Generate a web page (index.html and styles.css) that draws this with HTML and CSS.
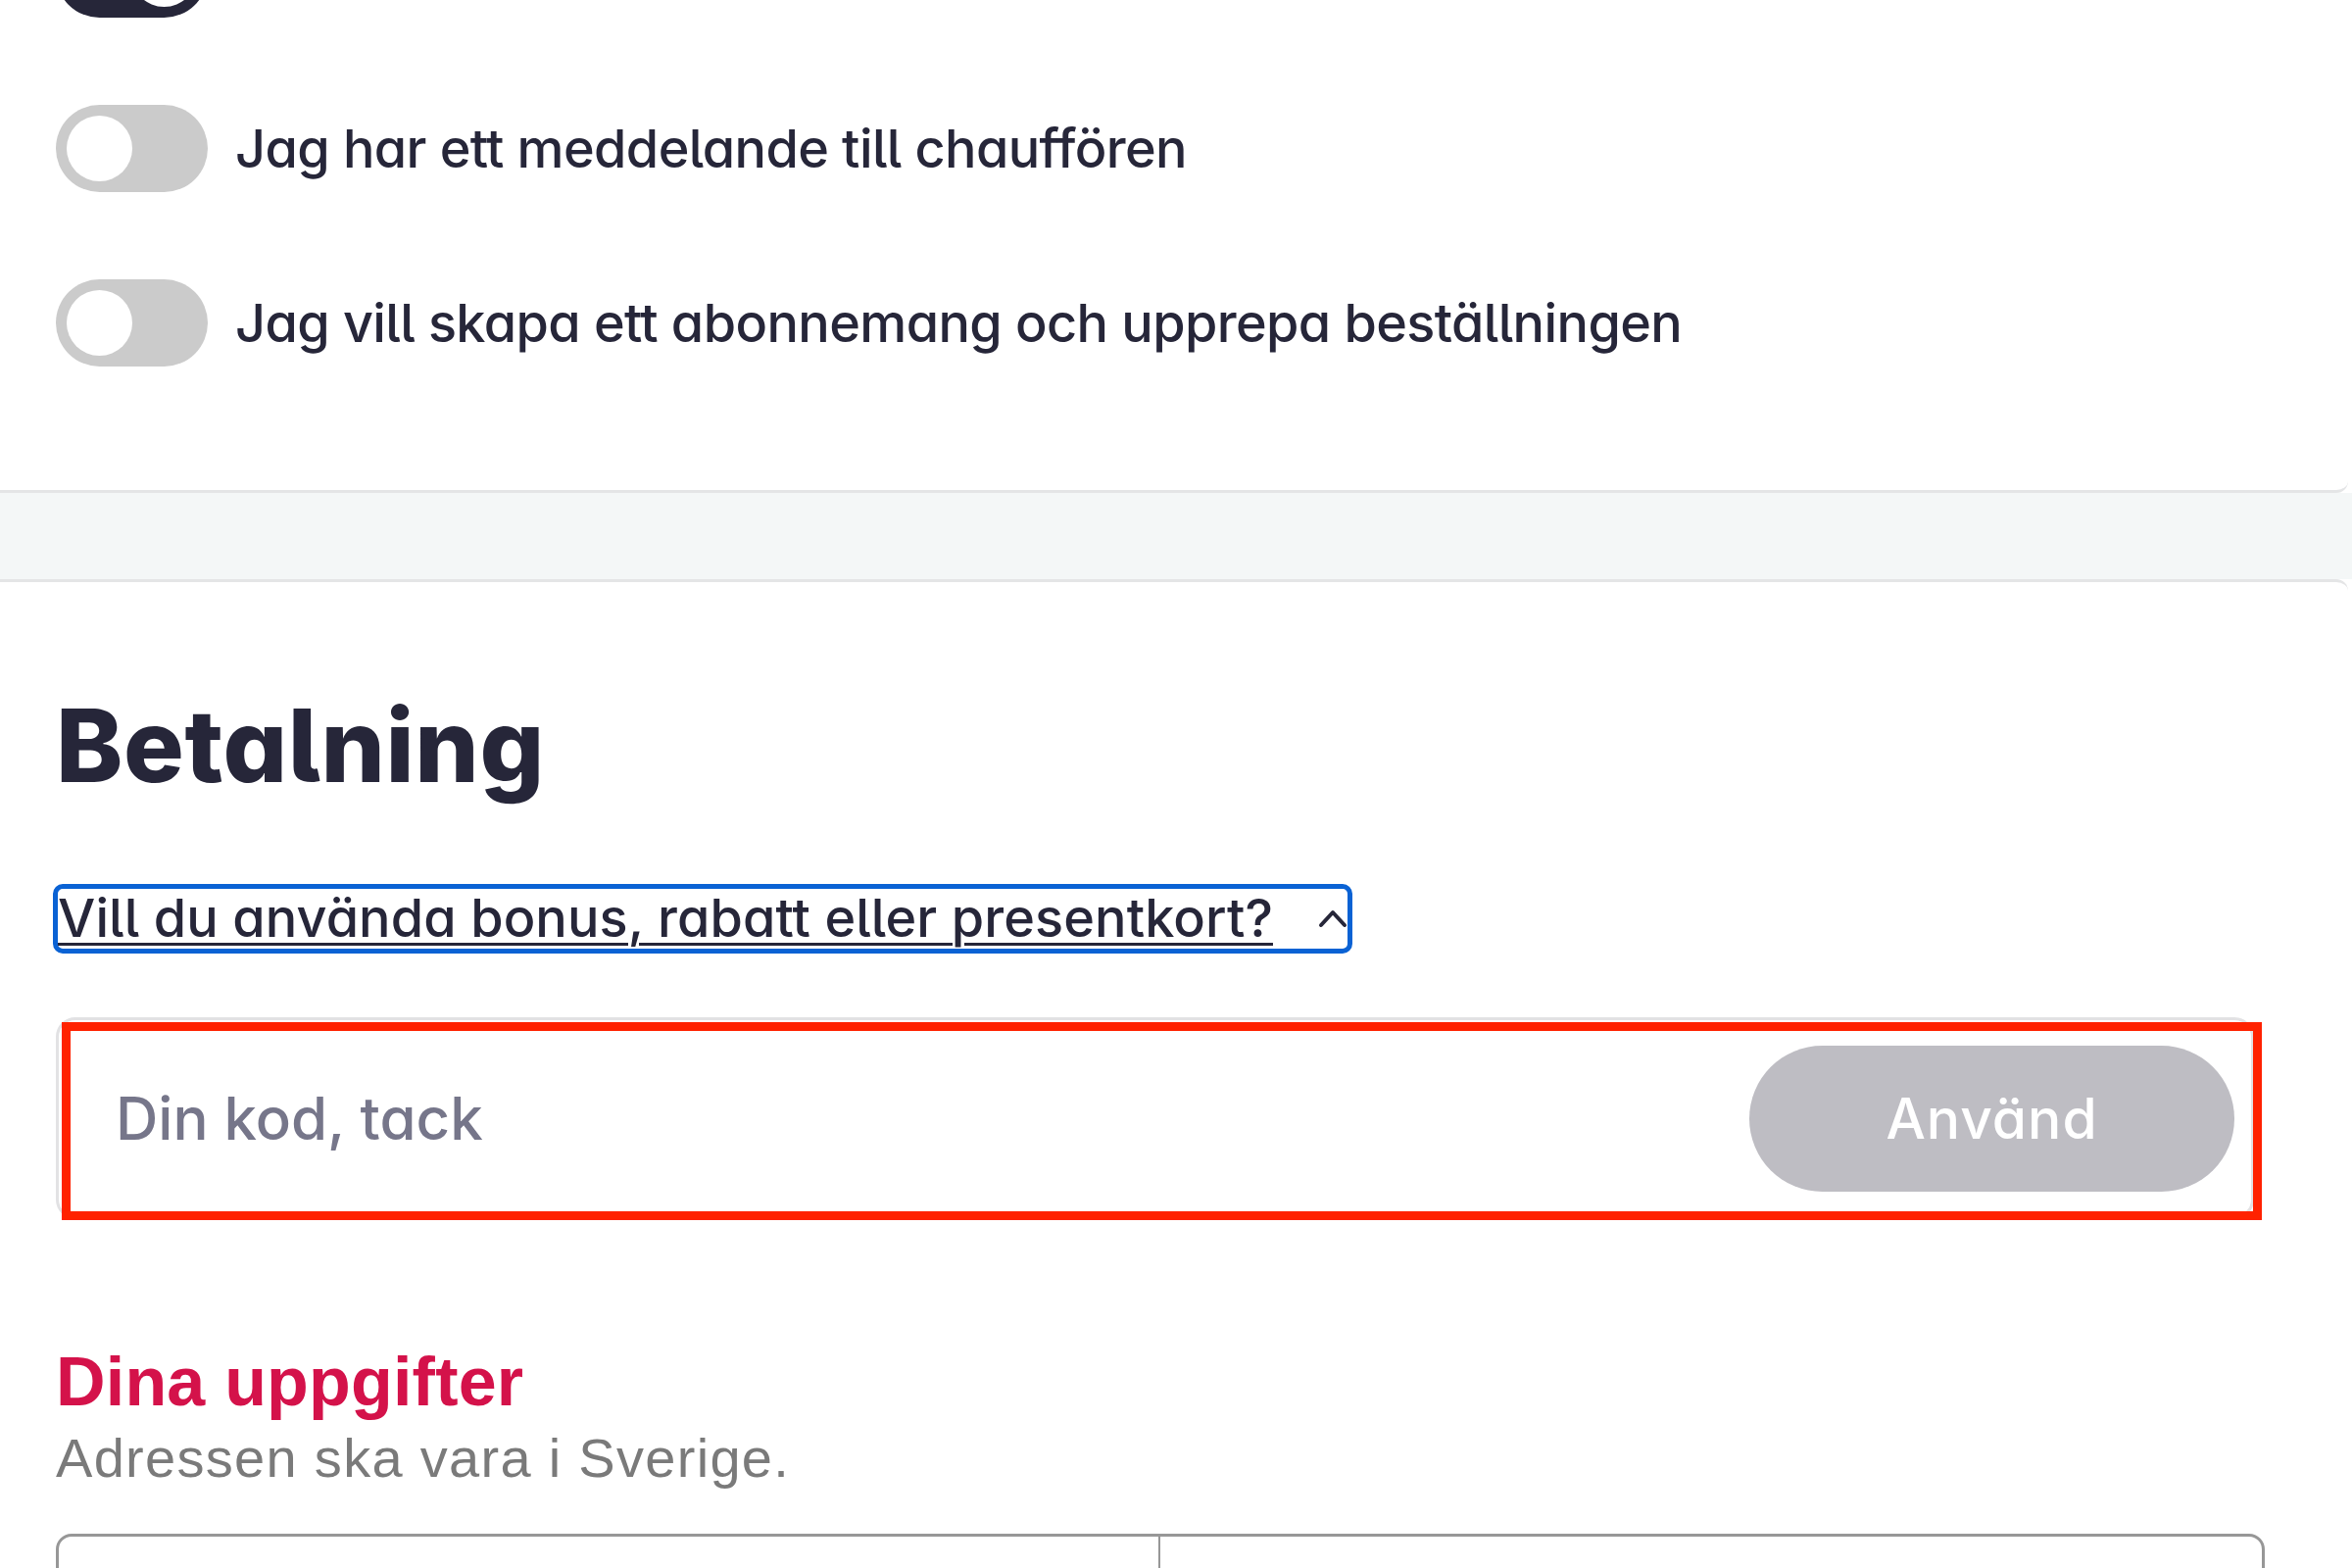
FILE: index.html
```html
<!DOCTYPE html>
<html lang="sv">
<head>
    <meta charset="UTF-8">
    <title>Kassa - Betalning</title>
    <link rel="stylesheet" href="styles.css">
</head>
<body>
<div class="card card-options">
    <ul class="options">
        <li class="option">
            <span class="switch on"><span class="knob"></span></span>
        </li>
        <li class="option">
            <span class="switch"><span class="knob"></span></span>
            <span class="option-label">Jag har ett meddelande till chauffören</span>
        </li>
        <li class="option">
            <span class="switch"><span class="knob"></span></span>
            <span class="option-label">Jag vill skapa ett abonnemang och upprepa beställningen</span>
        </li>
    </ul>
</div>
<div class="band"></div>
<div class="card card-payment">
    <h1 class="title">Betalning</h1>
    <button class="promo-toggle" type="button">
        <span class="promo-text">Vill du använda bonus, rabatt eller presentkort?</span>
        <svg class="chevron" width="30" height="20" viewBox="0 0 30 20">
            <path d="M3 17 L15 4 L27 17" fill="none" stroke="#262639" stroke-width="4" stroke-linecap="round" stroke-linejoin="round"/>
        </svg>
    </button>
    <div class="code-field">
        <input class="code-input" type="text" placeholder="Din kod, tack">
        <button class="code-btn" type="button">Använd</button>
    </div>
    <h2 class="details-title">Dina uppgifter</h2>
    <p class="details-note">Adressen ska vara i Sverige.</p>
    <div class="address">
        <div class="address-cell"></div>
        <div class="address-cell"></div>
    </div>
</div>
</body>
</html>
```

FILE: styles.css
```css
* {
    margin: 0;
    padding: 0;
    box-sizing: border-box;
}
body {
    background: #fff;
    overflow: hidden;
    height: 1600px;
    font-family: Inter, "Noto Sans", sans-serif;
    font-feature-settings: "cv11", "cv05";
    color: #262639;
}
/*kort*/
.card {
    background: #fff;
    margin-left: -20px;
    margin-right: 4px;
    padding-left: 77px;
    padding-right: 96px;
}
.card-options {
    height: 503px;
    border-bottom: 3px solid #e4e5e6;
    border-radius: 0 0 12px 0;
    overflow: hidden;
}
.band {
    height: 88px;
    background: #f4f7f7;
}
.card-payment {
    border-top: 3px solid #e4e5e6;
    border-radius: 0 12px 0 0;
    padding-top: 115px;
}
/*val*/
.options {
    list-style: none;
    margin-top: -71px;
    display: flex;
    flex-direction: column;
    gap: 89px;
}
.option {
    display: flex;
    align-items: center;
    gap: 28px;
    height: 89px;
}
.switch {
    flex: none;
    width: 155px;
    height: 89px;
    border-radius: 45px;
    background: #cbcbcb;
    padding: 11px;
    display: flex;
}
.switch.on {
    background: #262639;
    justify-content: flex-end;
}
.knob {
    width: 67px;
    height: 67px;
    border-radius: 50%;
    background: #fff;
}
.option-label {
    font-size: 54px;
    font-weight: 500;
    line-height: 1;
    letter-spacing: -0.6px;
}
/*betalning*/
.title {
    font-size: 103px;
    font-weight: 800;
    line-height: 1;
    letter-spacing: 0.6px;
}
.promo-toggle {
    margin-top: 90px;
    margin-left: -3px;
    display: inline-flex;
    align-items: center;
    gap: 46px;
    border: 5px solid #0a62d4;
    border-radius: 10px;
    background: none;
    padding: 3px 0 4px 0;
    font: inherit;
    color: inherit;
    cursor: pointer;
}
.promo-text {
    font-size: 54px;
    font-weight: 500;
    line-height: 1;
    letter-spacing: 0.1px;
    text-decoration: underline;
    text-decoration-thickness: 3px;
    text-underline-offset: 6px;
}
.chevron {
    display: block;
}
.code-field {
    position: relative;
    margin-top: 65px;
    height: 206px;
    border: 3px solid #e2e2e4;
    border-radius: 20px;
    display: flex;
    align-items: center;
    padding: 0 17px 0 58px;
}
/*markering*/
.code-field::after {
    content: "";
    position: absolute;
    left: 3px;
    top: 2px;
    right: -11px;
    bottom: -4px;
    border: 9px solid #ff2200;
    pointer-events: none;
}
.code-input {
    flex: 1;
    border: none;
    outline: none;
    background: none;
    font: inherit;
    font-size: 60px;
    font-weight: 500;
    color: #262639;
}
.code-input::placeholder {
    color: #76768a;
}
.code-btn {
    flex: none;
    width: 495px;
    height: 149px;
    border: none;
    border-radius: 75px;
    background: #bebdc3;
    color: #fff;
    font: inherit;
    font-size: 57px;
    font-weight: 500;
    letter-spacing: 1px;
}
/*uppgifter*/
.details-title {
    margin-top: 131px;
    font-family: "Liberation Sans", Arial, sans-serif;
    font-size: 70px;
    font-weight: 700;
    line-height: 1;
    letter-spacing: 0.2px;
    color: #d4124a;
}
.details-note {
    margin-top: 15px;
    font-family: "Liberation Sans", Arial, sans-serif;
    font-size: 56px;
    line-height: 1;
    letter-spacing: 1.3px;
    color: #7a7a7a;
}
.address {
    margin-top: 49px;
    margin-right: -11px;
    height: 160px;
    border: 3px solid #979797;
    border-radius: 16px;
    display: grid;
    grid-template-columns: 1122px 1fr;
}
.address-cell + .address-cell {
    border-left: 2px solid #979797;
}
```
